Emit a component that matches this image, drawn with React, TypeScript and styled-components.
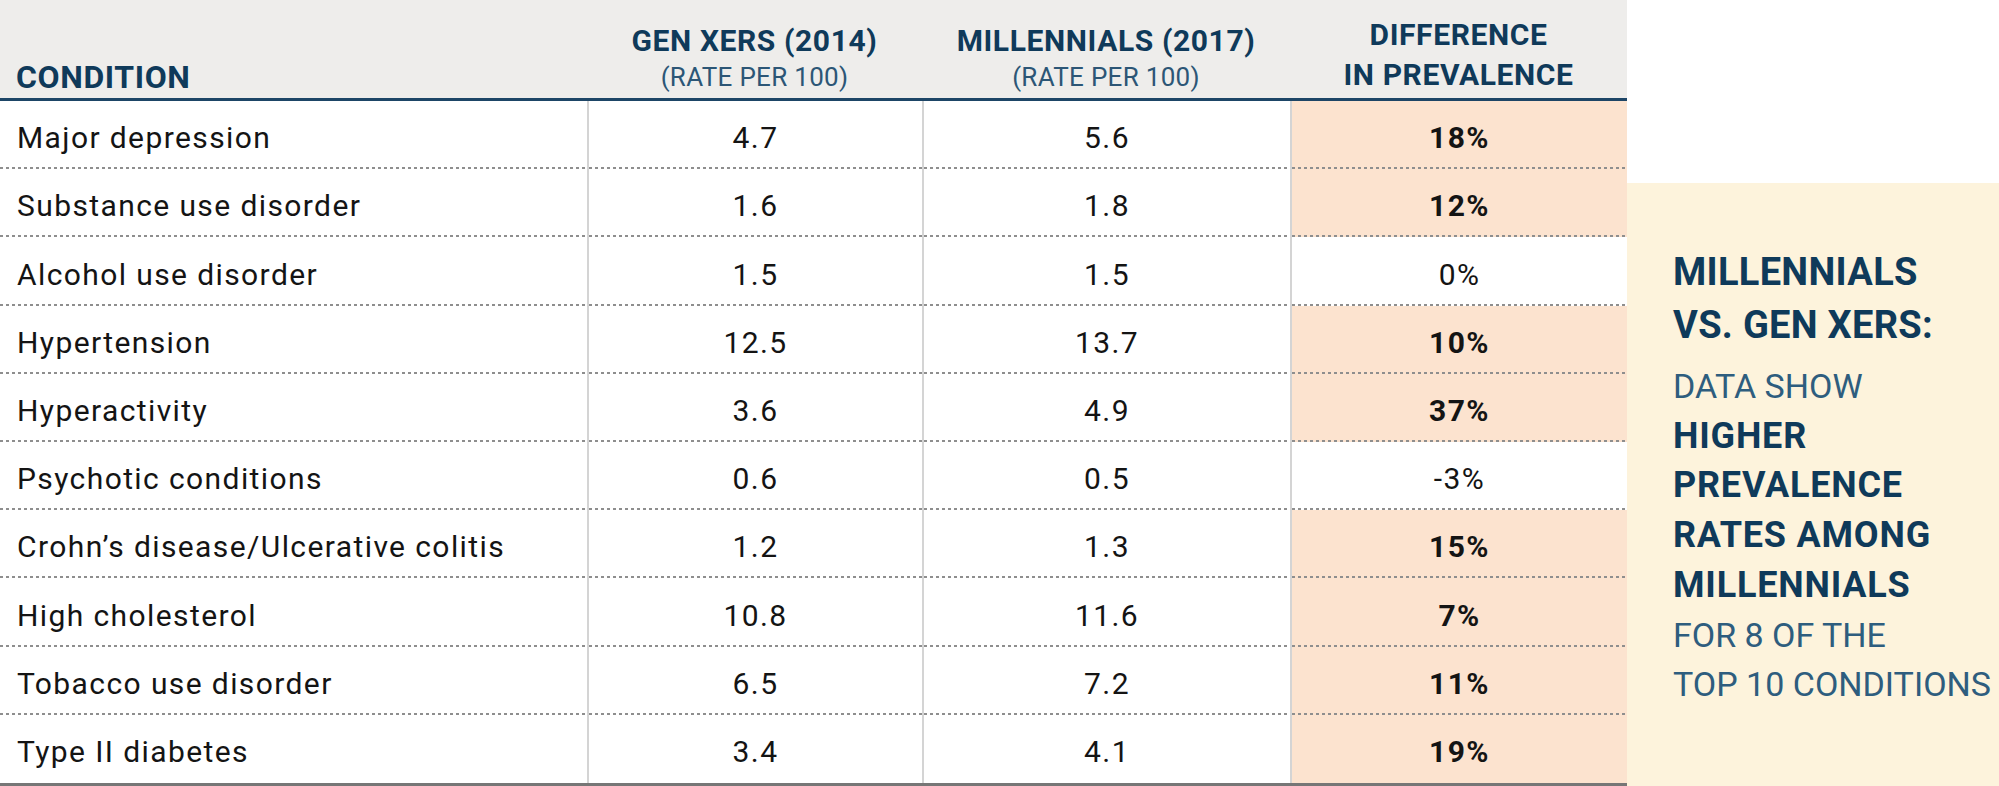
import React from 'react';
import styled, { createGlobalStyle } from 'styled-components';

const GlobalStyle = createGlobalStyle`
  html, body {
    margin: 0;
    padding: 0;
    background: #ffffff;
  }
  body {
    font-family: Roboto, 'Liberation Sans', Arial, sans-serif;
  }
`;

const COLUMNS = '587px 335px 368px 337px';
const NAVY = '#0f3a5a';
const PEACH = '#fce3cf';
const CREAM = '#fdf3dc';

const dots = 'linear-gradient(to right, #8e8e8e 55%, transparent 0) left bottom / 6px 2px repeat-x';

const Page = styled.div`
  display: flex;
  width: 1999px;
  height: 786px;
  overflow: hidden;
`;

const Table = styled.div`
  width: 1627px;
  height: 786px;
  box-sizing: border-box;
  display: flex;
  flex-direction: column;
  border-bottom: 3px solid #767676;
`;

const HeadRow = styled.div`
  display: grid;
  grid-template-columns: ${COLUMNS};
  height: 101px;
  box-sizing: border-box;
  background: #eeedeb;
  border-bottom: 3px solid #1d4566;
`;

const HeadCell = styled.div<{ $left?: boolean; $lh?: number }>`
  display: flex;
  flex-direction: column;
  justify-content: flex-end;
  align-items: ${p => (p.$left ? 'flex-start' : 'center')};
  padding: 0 0 3px ${p => (p.$left ? '16px' : '0')};
  line-height: ${p => p.$lh || 36}px;
  color: ${NAVY};
`;

const HeadTitle = styled.span<{ $size?: number }>`
  font-weight: 700;
  font-size: ${p => p.$size || 30}px;
  letter-spacing: 0.6px;
  white-space: nowrap;
`;

const HeadSub = styled.span`
  font-weight: 400;
  font-size: 26px;
  letter-spacing: 0.3px;
  color: #2c5676;
  white-space: nowrap;
`;

const Row = styled.div`
  flex: 1;
  display: grid;
  grid-template-columns: ${COLUMNS};
`;

const Cell = styled.div<{ $bg?: string; $left?: boolean; $bold?: boolean; $last?: boolean }>`
  display: flex;
  align-items: center;
  justify-content: ${p => (p.$left ? 'flex-start' : 'center')};
  box-sizing: border-box;
  padding-left: ${p => (p.$left ? '17px' : '0')};
  padding-top: 5px;
  border-left: ${p => (p.$left ? 'none' : '2px solid #d4d4d4')};
  background: ${p => (p.$last ? '' : `${dots}, `)}${p => p.$bg || '#ffffff'};
  font-size: 30px;
  letter-spacing: 1.4px;
  font-weight: ${p => (p.$bold ? 700 : 400)};
  color: #141414;
  white-space: nowrap;
`;

const Side = styled.div`
  flex: 1;
  display: flex;
  flex-direction: column;
`;

const SideBlank = styled.div`
  height: 183px;
  background: #ffffff;
`;

const Callout = styled.div`
  flex: 1;
  background: ${CREAM};
  padding: 63px 0 0 46px;
  color: ${NAVY};
`;

const CalloutTitle = styled.div`
  font-weight: 700;
  font-size: 38px;
  letter-spacing: 0.3px;
  line-height: 53px;
  white-space: nowrap;
`;

const CalloutBody = styled.div`
  margin-top: 10px;
  font-size: 34px;
  line-height: 49.7px;
  color: #2e5d7e;
  white-space: nowrap;
`;

const Strong = styled.span`
  font-weight: 700;
  font-size: 36px;
  letter-spacing: 0.8px;
  color: ${NAVY};
`;

type Item = { name: string; genx: string; mill: string; diff: string; up: boolean };

const rows: Item[] = [
  { name: 'Major depression', genx: '4.7', mill: '5.6', diff: '18%', up: true },
  { name: 'Substance use disorder', genx: '1.6', mill: '1.8', diff: '12%', up: true },
  { name: 'Alcohol use disorder', genx: '1.5', mill: '1.5', diff: '0%', up: false },
  { name: 'Hypertension', genx: '12.5', mill: '13.7', diff: '10%', up: true },
  { name: 'Hyperactivity', genx: '3.6', mill: '4.9', diff: '37%', up: true },
  { name: 'Psychotic conditions', genx: '0.6', mill: '0.5', diff: '-3%', up: false },
  { name: 'Crohn\u2019s disease/Ulcerative colitis', genx: '1.2', mill: '1.3', diff: '15%', up: true },
  { name: 'High cholesterol', genx: '10.8', mill: '11.6', diff: '7%', up: true },
  { name: 'Tobacco use disorder', genx: '6.5', mill: '7.2', diff: '11%', up: true },
  { name: 'Type II diabetes', genx: '3.4', mill: '4.1', diff: '19%', up: true },
];

const App = () => {
  return (
    <Page>
      <GlobalStyle />
      <Table>
        <HeadRow>
          <HeadCell $left>
            <HeadTitle $size={32}>CONDITION</HeadTitle>
          </HeadCell>
          <HeadCell>
            <HeadTitle>GEN XERS (2014)</HeadTitle>
            <HeadSub>(RATE PER 100)</HeadSub>
          </HeadCell>
          <HeadCell>
            <HeadTitle>MILLENNIALS (2017)</HeadTitle>
            <HeadSub>(RATE PER 100)</HeadSub>
          </HeadCell>
          <HeadCell $lh={40}>
            <HeadTitle>DIFFERENCE</HeadTitle>
            <HeadTitle>IN PREVALENCE</HeadTitle>
          </HeadCell>
        </HeadRow>
        {rows.map((r, i) => {
          const last = i === rows.length - 1;
          return (
            <Row key={r.name}>
              <Cell $left $last={last}>{r.name}</Cell>
              <Cell $last={last}>{r.genx}</Cell>
              <Cell $last={last}>{r.mill}</Cell>
              <Cell $last={last} $bold={r.up} $bg={r.up ? PEACH : '#ffffff'}>
                {r.diff}
              </Cell>
            </Row>
          );
        })}
      </Table>
      <Side>
        <SideBlank />
        <Callout>
          <CalloutTitle>
            MILLENNIALS
            <br />
            VS. GEN XERS:
          </CalloutTitle>
          <CalloutBody>
            DATA SHOW
            <br />
            <Strong>HIGHER</Strong>
            <br />
            <Strong>PREVALENCE</Strong>
            <br />
            <Strong>RATES AMONG</Strong>
            <br />
            <Strong>MILLENNIALS</Strong>
            <br />
            FOR 8 OF THE
            <br />
            TOP 10 CONDITIONS
          </CalloutBody>
        </Callout>
      </Side>
    </Page>
  );
};

export default App;
